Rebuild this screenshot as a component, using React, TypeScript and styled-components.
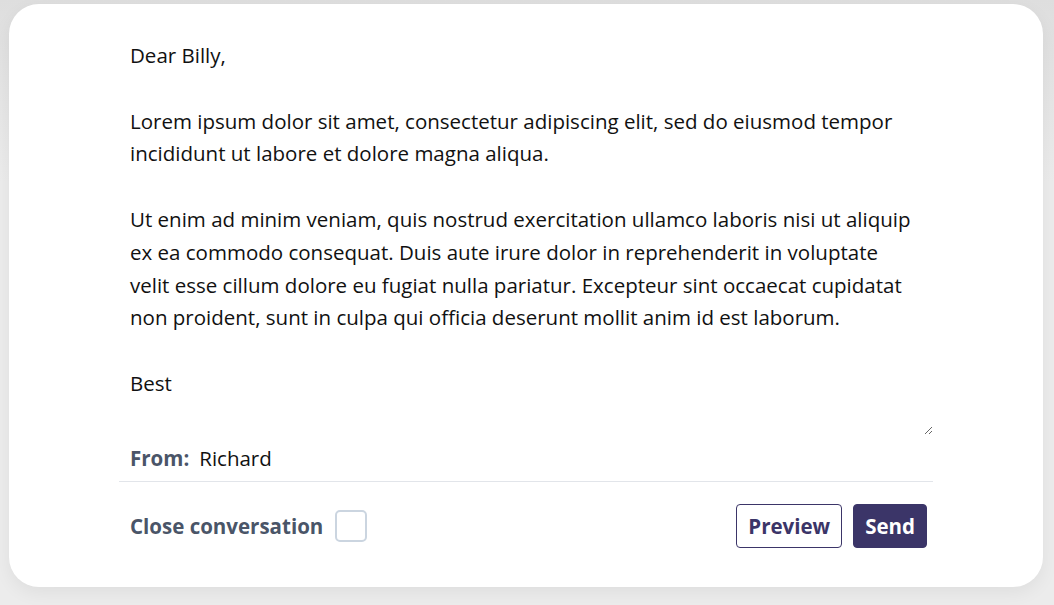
import React, { useState } from "react";
import styled, { createGlobalStyle } from "styled-components";

const FONT = `"Open Sans", "Noto Sans", sans-serif`;

const Global = createGlobalStyle`
  html, body { margin: 0; padding: 0; }
  body {
    background: #ececec;
    font-family: ${FONT};
  }
`;

const Page = styled.div`
  width: 1054px;
  height: 605px;
  box-sizing: border-box;
  padding: 4px 11px 18px 9px;
  background: linear-gradient(180deg, #dedede 0%, #ececec 30%, #ececec 100%);
`;

const Card = styled.div`
  height: 100%;
  box-sizing: border-box;
  background: #fff;
  border-radius: 30px;
  padding: 25px 110px 0 110px;
  display: flex;
  flex-direction: column;
  box-shadow: 0 6px 18px rgba(0, 0, 0, 0.06);
`;

const Body = styled.textarea`
  display: block;
  width: 100%;
  height: 406px;
  box-sizing: border-box;
  border: none;
  outline: none;
  padding: 10px 11px;
  margin: 0;
  font-family: ${FONT};
  font-size: 20.5px;
  line-height: 32.8px;
  color: #111;
  background: transparent;
  resize: vertical;
`;

const FromRow = styled.div`
  display: flex;
  align-items: center;
  gap: 10px;
  height: 46px;
  padding: 0 11px;
  border-bottom: 1px solid #e2e5ea;
  font-size: 20.5px;
`;

const Label = styled.span`
  font-weight: 700;
  color: #4a5568;
`;

const Value = styled.span`
  color: #111;
`;

const Footer = styled.div`
  display: flex;
  align-items: center;
  justify-content: space-between;
  padding: 22px 6px 0 11px;
`;

const CloseLabel = styled.label`
  display: flex;
  align-items: center;
  gap: 12px;
  font-size: 20.5px;
  font-weight: 700;
  color: #4a5568;
`;

const Box = styled.input`
  appearance: none;
  width: 32px;
  height: 32px;
  margin: 0;
  border: 2px solid #cbd5e0;
  border-radius: 5px;
  background: #fff;
`;

const Actions = styled.div`
  display: flex;
  gap: 11px;
`;

const Button = styled.button<{ $primary?: boolean }>`
  height: 44px;
  padding: 0 11px;
  border-radius: 4px;
  border: 1px solid #3b3568;
  background: ${(p) => (p.$primary ? "#3b3568" : "#fff")};
  color: ${(p) => (p.$primary ? "#fff" : "#3b3568")};
  font-family: ${FONT};
  font-size: 20.5px;
  font-weight: 700;
`;

const text = `Dear Billy,

Lorem ipsum dolor sit amet, consectetur adipiscing elit, sed do eiusmod tempor incididunt ut labore et dolore magna aliqua.

Ut enim ad minim veniam, quis nostrud exercitation ullamco laboris nisi ut aliquip ex ea commodo consequat. Duis aute irure dolor in reprehenderit in voluptate velit esse cillum dolore eu fugiat nulla pariatur. Excepteur sint occaecat cupidatat non proident, sunt in culpa qui officia deserunt mollit anim id est laborum.

Best`;

export default function App() {
  const [value, setValue] = useState(text);
  return (
    <>
      <Global />
      <Page>
        <Card>
          <Body value={value} onChange={(e) => setValue(e.target.value)} />
          <FromRow>
            <Label>From:</Label>
            <Value>Richard</Value>
          </FromRow>
          <Footer>
            <CloseLabel>
              Close conversation
              <Box type="checkbox" />
            </CloseLabel>
            <Actions>
              <Button>Preview</Button>
              <Button $primary>Send</Button>
            </Actions>
          </Footer>
        </Card>
      </Page>
    </>
  );
}
